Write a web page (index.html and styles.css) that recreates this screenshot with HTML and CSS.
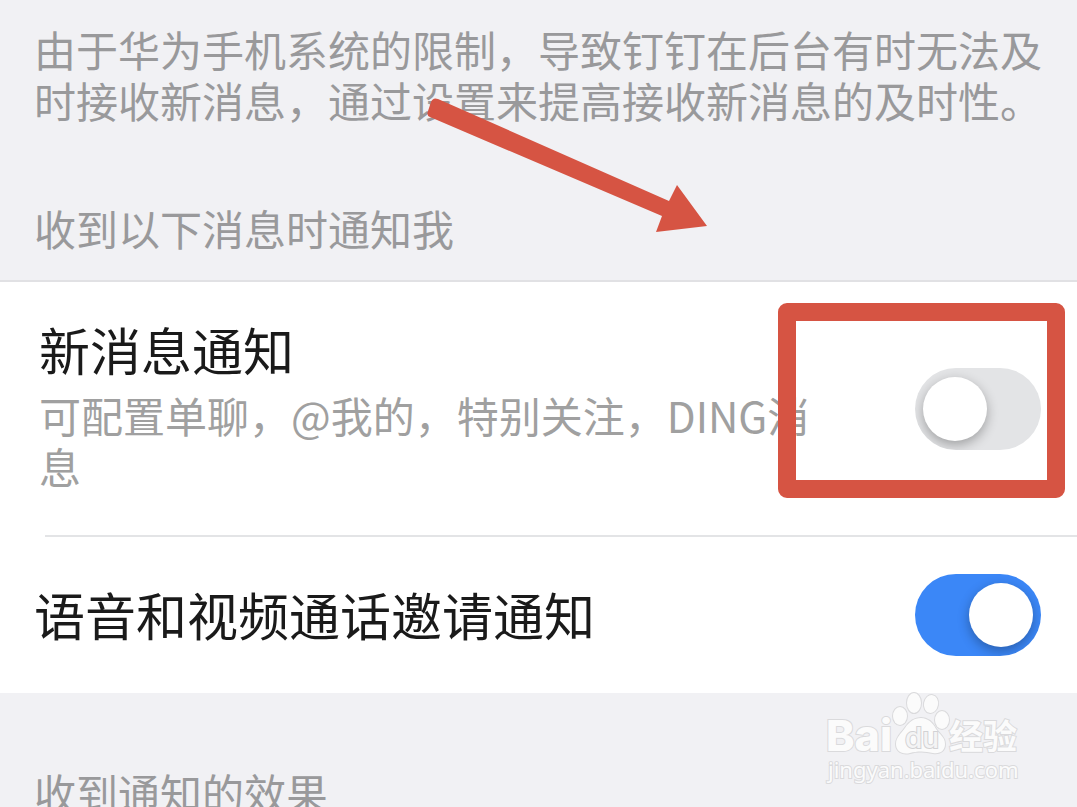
FILE: index.html
```html
<!DOCTYPE html>
<html lang="zh-CN">
<head>
<meta charset="utf-8">
<meta name="viewport" content="width=device-width, initial-scale=1">
<title>新消息通知</title>
<link rel="stylesheet" href="styles.css">
</head>
<body>
<main class="screen">
  <p class="intro">由于华为手机系统的限制，导致钉钉在后台有时无法及时接收新消息，通过设置来提高接收新消息的及时性。</p>
  <h2 class="group-title">收到以下消息时通知我</h2>
  <section class="group">
    <div class="row row-detail">
      <div class="row-text">
        <label class="row-title" for="new-message">新消息通知</label>
        <p class="row-desc" id="new-message-desc">可配置单聊，@我的，特别关注，DING消息</p>
      </div>
      <input class="switch" type="checkbox" role="switch" id="new-message" aria-describedby="new-message-desc">
      <div class="highlight"></div>
    </div>
    <div class="row row-single">
      <label class="row-title" for="call-invite">语音和视频通话邀请通知</label>
      <input class="switch" type="checkbox" role="switch" id="call-invite" checked>
    </div>
  </section>
  <h2 class="group-title group-title-next">收到通知的效果</h2>

  <svg class="arrow" viewBox="0 0 284 138" aria-hidden="true">
    <path d="M13 4 Q8 2 6 7 L3 16 Q1 20 5 22 L237 121 L231 137 L282 131 L252 90 L244 106 Z"/>
  </svg>

  <svg class="watermark" viewBox="0 0 204 100" aria-hidden="true">
    <g class="mark-shape">
      <text class="mark-bai" x="2" y="60">Bai</text>
      <ellipse cx="76" cy="25" rx="7" ry="9"/>
      <ellipse cx="90" cy="12" rx="7" ry="10"/>
      <ellipse cx="107" cy="13" rx="7" ry="9" transform="rotate(10 107 13)"/>
      <ellipse cx="118" cy="29" rx="7" ry="9"/>
      <path d="M97 27 C104 27 109 32 112 38 C116 44 121 46 121 53 C121 60 116 63 109 62 C101 60 93 60 86 62 C78 64 72 60 72 53 C72 46 77 43 81 37 C85 31 90 27 97 27 Z"/>
      <text class="mark-jingyan" x="125" y="58">经验</text>
      <text class="mark-url" x="4" y="87">jingyan.baidu.com</text>
    </g>
    <text class="mark-du" x="81" y="57">du</text>
  </svg>
</main>
</body>
</html>
```
FILE: styles.css
```css
* {
  box-sizing: border-box;
}

body {
  margin: 0;
  background: #f1f1f4;
  font-family: "Noto Sans CJK SC", sans-serif;
}

p,
h2 {
  margin: 0;
  font-weight: 400;
}

.screen {
  position: relative;
  height: 100vh;
  overflow: hidden;
}

.intro,
.group-title,
.row-desc {
  font-size: 42px;
  line-height: 51px;
  color: #99999b;
}

.intro {
  padding: 23px 34px 0;
}

.group-title {
  padding: 77px 34px 27px;
}

.group-title-next {
  padding-top: 73px;
}

.group {
  background: #fff;
  border-top: 2px solid #e1e1e4;
}

.row {
  position: relative;
  display: flex;
  align-items: center;
  justify-content: space-between;
  gap: 80px;
  padding-right: 36px;
}

.row-detail {
  padding-top: 37px;
  padding-bottom: 37px;
  padding-left: 39px;
}

.row-detail .row-text {
  padding-bottom: 7px;
}

.row-single {
  min-height: 158px;
  padding-top: 2px;
  padding-left: 34px;
}

.row-single .row-title {
  padding-bottom: 2px;
}

.row-single::before {
  content: "";
  position: absolute;
  top: 0;
  right: 0;
  left: 45px;
  height: 2px;
  background: #e3e4e6;
}

.row-title {
  display: block;
  font-size: 51px;
  line-height: 60px;
  color: #1a1a1a;
}

.row-desc {
  margin-top: 10px;
  color: #a0a0a0;
}

.switch {
  appearance: none;
  flex: none;
  display: flex;
  align-items: center;
  width: 126px;
  height: 82px;
  margin: 0;
  padding: 0 8px;
  border-radius: 41px;
  background: #e3e4e6;
  overflow: hidden;
}

.switch::before {
  content: "";
  width: 64px;
  height: 64px;
  border-radius: 50%;
  background: #fff;
  box-shadow: 0 4px 12px rgba(0, 0, 0, 0.3);
}

.switch:checked {
  justify-content: flex-end;
  background: #3b87f7;
}

.highlight {
  position: absolute;
  top: 21px;
  right: 12px;
  width: 287px;
  height: 195px;
  border: 18px solid #d65443;
  border-radius: 9px;
  pointer-events: none;
}

.arrow {
  position: absolute;
  top: 95px;
  left: 425px;
  width: 284px;
  fill: #d65443;
}

.watermark {
  position: absolute;
  right: 49px;
  bottom: 16px;
  width: 204px;
}

.mark-shape {
  fill: #fbfbfb;
  stroke: #dadadc;
  stroke-width: 2px;
  paint-order: stroke;
}

.mark-bai {
  font: 800 43px "Inter", sans-serif;
}

.mark-du {
  font: 500 28px "Inter", sans-serif;
  fill: #f4f4f5;
  stroke: #d2d2d4;
  stroke-width: 2px;
  paint-order: stroke;
}

.mark-jingyan {
  font: 700 34px "Noto Sans CJK SC", sans-serif;
}

.mark-url {
  font: 400 22px "Noto Sans", sans-serif;
}
```
